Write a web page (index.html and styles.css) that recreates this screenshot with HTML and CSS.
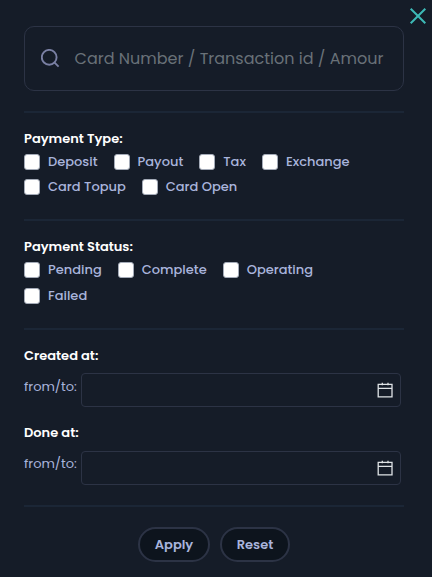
FILE: index.html
```html
<!DOCTYPE html>
<html lang="en">
<head>
<meta charset="utf-8">
<title>Filters</title>
<link rel="stylesheet" href="styles.css">
</head>
<body>
<button class="close" aria-label="Close"><svg width="18" height="18" viewBox="0 0 18 18"><path d="M1.7 1.7 16.3 16.3M16.3 1.7 1.7 16.3"/></svg></button>
<form class="filters">
  <div class="search">
    <svg class="search-icon" width="20" height="20" viewBox="0 0 20 20"><circle cx="8.2" cy="8.3" r="7.4"/><path d="m13.6 13.7 4 4"/></svg>
    <span class="placeholder">Card Number / Transaction id / Amour</span>
  </div>
  <section class="group type">
    <h2>Payment Type:</h2>
    <div class="options">
      <label><input type="checkbox"><span>Deposit</span></label>
      <label><input type="checkbox"><span>Payout</span></label>
      <label><input type="checkbox"><span>Tax</span></label>
      <label><input type="checkbox"><span>Exchange</span></label>
      <label><input type="checkbox"><span>Card Topup</span></label>
      <label><input type="checkbox"><span>Card Open</span></label>
    </div>
  </section>
  <section class="group status">
    <h2>Payment Status:</h2>
    <div class="options">
      <label><input type="checkbox"><span>Pending</span></label>
      <label><input type="checkbox"><span>Complete</span></label>
      <label><input type="checkbox"><span>Operating</span></label>
      <label><input type="checkbox"><span>Failed</span></label>
    </div>
  </section>
  <section class="group dates">
    <h2>Created at:</h2>
    <div class="range"><span class="range-label">from/to:</span><div class="date"><svg width="16" height="16" viewBox="0 0 16 16"><path d="M1.2 2.4h13.8v12.4H1.2zM1.2 6.4h13.8M5.3 .8v2.4M11 .8v2.4"/></svg></div></div>
    <h2 class="done">Done at:</h2>
    <div class="range"><span class="range-label">from/to:</span><div class="date"><svg width="16" height="16" viewBox="0 0 16 16"><path d="M1.2 2.4h13.8v12.4H1.2zM1.2 6.4h13.8M5.3 .8v2.4M11 .8v2.4"/></svg></div></div>
  </section>
  <div class="actions">
    <button type="button" class="apply">Apply</button>
    <button type="button" class="reset">Reset</button>
  </div>
</form>
</body>
</html>
```
FILE: styles.css
```css
* { box-sizing: border-box; }
body {
  margin: 0;
  height: 577px;
  overflow: hidden;
  background: #151c28;
  color: #a9b4dc;
  font-family: Poppins, Inter, "Open Sans", sans-serif;
  font-size: 13px;
}
svg { display: block; fill: none; }
.close {
  position: absolute;
  top: 7px;
  right: 5px;
  padding: 0;
  border: 0;
  background: none;
}
.close svg { stroke: #3db9b6; stroke-width: 2; }
.filters { padding: 26px 28px 0 24px; }
.search {
  display: flex;
  align-items: center;
  height: 65px;
  padding: 0 19px 0 16px;
  border: 1px solid #2c3345;
  border-radius: 10px;
  margin-bottom: 20px;
}
.search-icon { stroke: #7a80a4; stroke-width: 1.9; margin-right: 13.6px; }
.placeholder { color: #697178; font-size: 16px; white-space: nowrap; }
.group { border-top: 2px solid #1b2636; }
.type { height: 108px; padding-top: 16px; }
.status { height: 109px; padding-top: 16px; }
.dates { height: 177px; padding-top: 16px; }
h2 {
  width: max-content;
  margin: 0;
  height: 20px;
  line-height: 20px;
  font-size: 13px;
  font-weight: 600;
  color: #fff;
}
.options { display: flex; flex-wrap: wrap; column-gap: 16px; row-gap: 5px; padding: 3px 16px 0 0; }
.status .options { row-gap: 6px; }
label { display: flex; align-items: center; gap: 8px; height: 20px; font-weight: 500; white-space: nowrap; }
label span { line-height: 18px; padding-bottom: 1px; }
input {
  appearance: none;
  width: 16px;
  height: 16px;
  margin: 0;
  background: #fff;
  border: 1px solid #a4abb8;
  border-radius: 3px;
}
.range { display: flex; height: 34px; margin-top: 7px; }
.range-label { width: 57px; line-height: 27px; white-space: nowrap; }
.done { margin-top: 16px; }
.done + .range { margin-top: 8px; }
.done + .range .range-label { line-height: 25px; }
.date {
  display: flex;
  align-items: center;
  justify-content: flex-end;
  width: 320px;
  padding-right: 7px;
  border: 1px solid #2c3345;
  border-radius: 4px;
}
.date svg { stroke: #dfe3e6; stroke-width: 1.3; }
.actions {
  display: flex;
  justify-content: center;
  gap: 10px;
  border-top: 2px solid #1b2636;
  padding-top: 20px;
}
.actions button {
  height: 35px;
  padding: 0;
  border: 2px solid #2c3345;
  border-radius: 18px;
  background: #0d141d;
  color: #a9b4dc;
  font: inherit;
  font-weight: 600;
}
.apply { width: 72px; }
.reset { width: 70px; }
```
